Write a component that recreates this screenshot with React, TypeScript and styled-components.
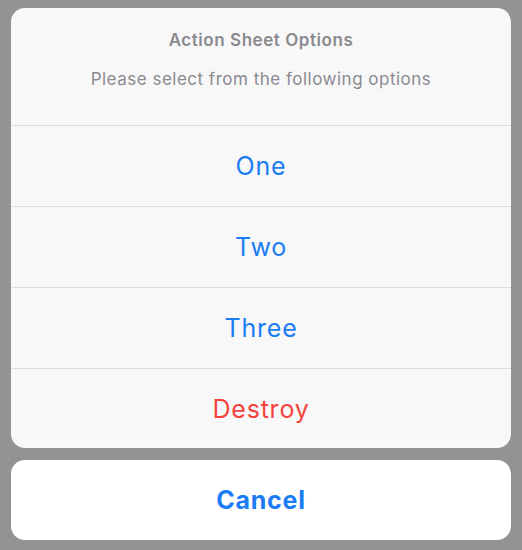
import React from "react";
import styled, { createGlobalStyle } from "styled-components";

const Global = createGlobalStyle`
  html, body { margin: 0; padding: 0; background: #939393; }
  body { font-family: Inter, "Noto Sans", "Liberation Sans", sans-serif; }
`;

const Screen = styled.div`
  width: 522px;
  height: 550px;
  box-sizing: border-box;
  padding: 8px 11px 10px;
  display: flex;
  flex-direction: column;
  gap: 12px;
  background: #939393;
`;

const Sheet = styled.div`
  background: #f8f8f9;
  border-radius: 14px;
  overflow: hidden;
  display: flex;
  flex-direction: column;
`;

const Header = styled.div`
  height: 118px;
  box-sizing: border-box;
  padding-top: 21px;
  display: flex;
  flex-direction: column;
  align-items: center;
  color: #8a8a8e;
  border-bottom: 1px solid #dcdce0;
`;

const Title = styled.div`
  font-size: 17px;
  font-weight: 600;
  line-height: 22px;
  letter-spacing: 0.55px;
`;

const Subtitle = styled.div`
  margin-top: 17px;
  font-size: 17px;
  font-weight: 400;
  line-height: 22px;
  letter-spacing: 0.5px;
`;

const Option = styled.button<{ $danger?: boolean; $last?: boolean }>`
  box-sizing: border-box;
  height: ${(p) => (p.$last ? "79px" : "81px")};
  border: none;
  border-bottom: ${(p) => (p.$last ? "none" : "1px solid #dcdce0")};
  background: transparent;
  font-family: inherit;
  font-size: 25px;
  font-weight: 400;
  letter-spacing: 0.8px;
  color: ${(p) => (p.$danger ? "#f4433c" : "#1b7cf4")};
  display: flex;
  align-items: center;
  justify-content: center;
  padding: 0;
`;

const Cancel = styled.button`
  box-sizing: border-box;
  height: 80px;
  border: none;
  border-radius: 14px;
  background: #ffffff;
  font-family: inherit;
  font-size: 25px;
  font-weight: 700;
  letter-spacing: 0.8px;
  color: #1b7cf4;
  padding: 0;
`;

export default function App() {
  return (
    <>
      <Global />
      <Screen>
        <Sheet>
          <Header>
            <Title>Action Sheet Options</Title>
            <Subtitle>Please select from the following options</Subtitle>
          </Header>
          <Option>One</Option>
          <Option>Two</Option>
          <Option>Three</Option>
          <Option $danger $last>Destroy</Option>
        </Sheet>
        <Cancel>Cancel</Cancel>
      </Screen>
    </>
  );
}
